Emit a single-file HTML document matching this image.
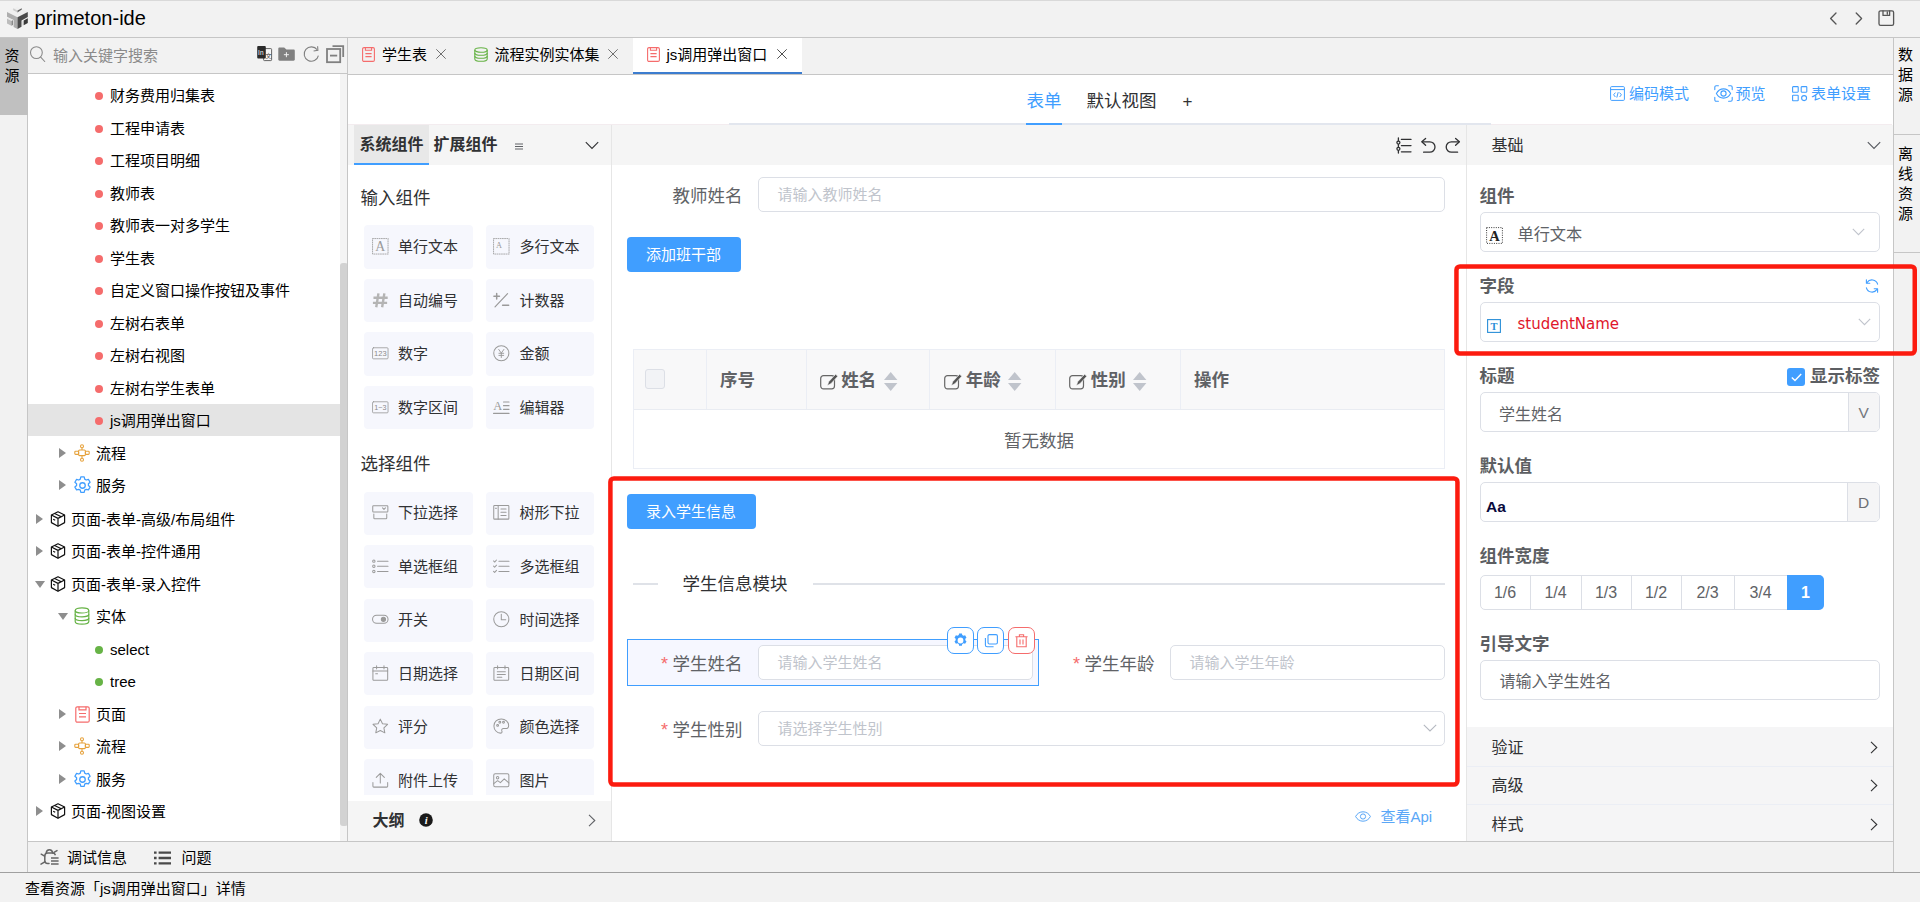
<!DOCTYPE html>
<html lang="zh-CN">
<head>
<meta charset="utf-8">
<title>primeton-ide</title>
<style>
*{box-sizing:border-box;margin:0;padding:0}
html,body{width:1920px;height:902px;overflow:hidden;background:#f2f2f2}
body{font-family:"Liberation Sans","Noto Sans CJK SC",sans-serif;font-size:15px;color:#000;position:relative}
.abs{position:absolute}
.t{position:absolute;white-space:nowrap;line-height:1}
svg{position:absolute;overflow:visible}
/* frame */
#titlebar{left:0;top:0;width:1920px;height:38px;background:#f2f2f2;border-top:1px solid #d9d9d9;border-bottom:1px solid #c6c6c6}
#leftstrip{left:0;top:38px;width:28px;height:835px;background:#f2f2f2;border-right:1px solid #c6c6c6}
#lefttab{left:0;top:38px;width:28px;height:77px;background:#c0c0c0}
#search{left:28px;top:38px;width:319px;height:36px;background:#f2f2f2;border-bottom:1px solid #c6c6c6}
#tree{left:28px;top:74px;width:319px;height:768px;background:#fff}
#treesb{left:340px;top:74px;width:7px;height:768px;background:#f4f4f4}
#treethumb{left:339.500px;top:263px;width:8px;height:563px;background:#d2d2d2;border-radius:3px}
#vdiv{left:347px;top:38px;width:1px;height:804px;background:#c6c6c6}
#tabbar{left:348px;top:38px;width:1545px;height:37px;background:#f2f2f2;border-bottom:1px solid #c6c6c6}
#main{left:348px;top:75px;width:1545px;height:767px;background:#fff}
#rightstrip{left:1893px;top:38px;width:27px;height:835px;background:#f2f2f2;border-left:1px solid #c6c6c6}
#bottombar{left:28px;top:841px;width:1865px;height:32px;background:#f2f2f2;border-top:1px solid #c6c6c6}
#statusbar{left:0;top:872px;width:1920px;height:30px;background:#f2f2f2;border-top:1px solid #a0a0a0}
/* tree */
.row{position:absolute;left:28px;width:312px;height:32.5px}
.row.sel{background:#e4e4e4}
.dot{position:absolute;width:8px;height:8px;border-radius:50%;background:#f56c6c}
.dot.g{background:#67b346}
.tt{position:absolute;white-space:nowrap;font-size:15px;line-height:20px;color:#000}
.arr{position:absolute;width:0;height:0;border-style:solid}
.arr.r{border-width:5px 0 5px 7px;border-color:transparent transparent transparent #8e8e8e}
.arr.d{border-width:7px 5px 0 5px;border-color:#8e8e8e transparent transparent transparent}
.th{top:367.500px;font-size:17.500px;line-height:24px;font-weight:bold;color:#606266}
svg.ed{top:371.500px;width:19px;height:18px}
svg.ct{top:371.500px;width:14px;height:19px}
.pl{font-size:17.500px;line-height:24px;font-weight:bold;color:#5c5e62}
.inp{border:1px solid #dcdfe6;border-radius:5px;background:#fff}
.bg{top:581.500px;font-size:16px;line-height:22px;color:#606266;text-align:center}
</style>
</head>
<body>
<!-- FRAME -->
<div class="abs" id="titlebar"></div>
<div class="abs" id="leftstrip"></div>
<div class="abs" id="lefttab"></div>
<div class="abs" id="search"></div>
<div class="abs" id="tree"></div>
<div class="abs" id="treesb"></div>
<div class="abs" id="treethumb"></div>
<div class="abs" id="vdiv"></div>
<div class="abs" id="tabbar"></div>
<div class="abs" id="main"></div>
<div class="abs" id="rightstrip"></div>
<div class="abs" id="bottombar"></div>
<div class="abs" id="statusbar"></div>

<!-- TITLE -->
<!--TITLE-START-->
<!-- logo -->
<svg style="left:6px;top:6px" width="23" height="24" viewBox="0 0 23 24">
<polygon points="1,6 11.5,0.8 21.8,6 11.5,11.2" fill="#efefef"/>
<polygon points="7.2,2.3 11.5,4.5 11.5,6.5 7.2,4.3" fill="#cdcdcd"/>
<polygon points="11.5,4.5 15.8,2.2 15.8,3.500 11.5,6.5" fill="#636363"/>
<polygon points="1,6 11.5,11.2 11.5,22.9 7.600,20.900 7.600,14 1,10.800" fill="#adadad"/>
<polygon points="21.800,6 11.500,11.200 11.500,22.900 15.500,20.700 15.500,14.400 21.800,11" fill="#4b4b4b"/>
<polygon points="1,12.600 5.400,14.800 5.400,19.700 1,17.500" fill="#bcbcbc"/>
<polygon points="5.400,14.800 7,14.100 7,19 5.400,19.700" fill="#8a8a8a"/>
<polygon points="1,12.600 2.600,11.900 7,14.100 5.400,14.800" fill="#e6e6e6"/>
<polygon points="16,15.400 17.700,14.400 17.700,19.100 16,20" fill="#dedede"/>
<polygon points="17.700,14.400 21.800,12.200 21.800,17 17.700,19.200" fill="#383838"/>
</svg>
<div class="t" style="left:34.5px;top:6px;font-size:20px;line-height:24px;color:#000;letter-spacing:0.02px">primeton-ide</div>
<!-- title right icons -->
<svg style="left:1828px;top:10px" width="70" height="18" viewBox="0 0 70 18" fill="none" stroke="#555" stroke-width="1.3" stroke-linecap="round" stroke-linejoin="round">
<path d="M8 3L2.6 8.5 8 14"/><path d="M28.2 3l5.4 5.5-5.4 5.5"/>
<rect x="51" y="0.8" width="14.6" height="14.6" rx="1.6"/><path d="M55 0.8v4.6h6.6V0.8M59.3 2v2"/>
</svg>
<!-- left tab -->
<div class="t" style="left:4.5px;top:46px;font-size:15px;line-height:20px;width:16px;white-space:normal;color:#000">资源</div>
<!-- search -->
<svg style="left:29px;top:45px" width="17" height="18" viewBox="0 0 17 18" fill="none" stroke="#8a8a8a" stroke-width="1.1" stroke-linecap="round"><circle cx="7.4" cy="7.6" r="5.9"/><path d="M11.7 12.1l4 4.4"/></svg>
<div class="t" style="left:53px;top:46px;font-size:15px;line-height:20px;color:#8a8a8a">输入关键字搜索</div>
<!-- search right icons -->
<svg style="left:256px;top:44px" width="90" height="22" viewBox="0 0 90 22">
<rect x="7.6" y="4.6" width="8" height="12" rx="0.8" fill="#f7f7f7" stroke="#555" stroke-width="0.9"/>
<rect x="1.2" y="2" width="8.6" height="12.6" rx="1" fill="#2b2b2b"/>
<text x="2.1" y="10.6" font-family="Liberation Sans,sans-serif" font-size="6.5" fill="#fff">In</text>
<text x="9.6" y="14.2" font-family="Liberation Sans,Noto Sans CJK SC,sans-serif" font-size="6" fill="#333">文</text>
<path d="M22.3 4.6c0-.7.5-1.2 1.2-1.2h4.7l2.2 2.1h7.2c.7 0 1.2.5 1.2 1.2v8.9c0 .7-.5 1.2-1.2 1.2H23.5c-.7 0-1.2-.5-1.2-1.2z" fill="#808080"/>
<path d="M30.4 8.2v5M27.9 10.7h5" stroke="#f2f2f2" stroke-width="1"/>
<g transform="translate(0,1.600)"><path d="M61.2 4.2A7.2 7.2 0 1 0 62.4 10" fill="none" stroke="#808080" stroke-width="1.100"/>
<path d="M57.6 5.4l4.3-.6-.3-4.2" fill="none" stroke="#808080" stroke-width="1.100"/></g>
<path d="M76.5 2.2h10.7v10.7" fill="none" stroke="#808080" stroke-width="1.8"/>
<rect x="71" y="5" width="13.2" height="13.2" fill="none" stroke="#808080" stroke-width="1.8"/>
<path d="M74 11.6h7.2" stroke="#808080" stroke-width="1.8"/>
</svg>
<!--TITLE-END-->

<!-- TREE -->
<!--TREE-START-->
<div class="dot" style="left:94.5px;top:91.5px"></div>
<div class="tt" style="left:110px;top:86px">财务费用归集表</div>
<div class="dot" style="left:94.5px;top:124.5px"></div>
<div class="tt" style="left:110px;top:119px">工程申请表</div>
<div class="dot" style="left:94.5px;top:156.5px"></div>
<div class="tt" style="left:110px;top:151px">工程项目明细</div>
<div class="dot" style="left:94.5px;top:189.5px"></div>
<div class="tt" style="left:110px;top:184px">教师表</div>
<div class="dot" style="left:94.5px;top:221.5px"></div>
<div class="tt" style="left:110px;top:216px">教师表一对多学生</div>
<div class="dot" style="left:94.5px;top:254.5px"></div>
<div class="tt" style="left:110px;top:249px">学生表</div>
<div class="dot" style="left:94.5px;top:286.5px"></div>
<div class="tt" style="left:110px;top:281px">自定义窗口操作按钮及事件</div>
<div class="dot" style="left:94.5px;top:319.5px"></div>
<div class="tt" style="left:110px;top:314px">左树右表单</div>
<div class="dot" style="left:94.5px;top:351.5px"></div>
<div class="tt" style="left:110px;top:346px">左树右视图</div>
<div class="dot" style="left:94.5px;top:384.5px"></div>
<div class="tt" style="left:110px;top:379px">左树右学生表单</div>
<div class="row sel" style="top:403.75px"></div>
<div class="dot" style="left:94.5px;top:416.5px"></div>
<div class="tt" style="left:110px;top:411px">js调用弹出窗口</div>
<div class="arr r" style="left:59px;top:447.5px"></div>
<svg style="left:74.3px;top:444.0px" width="16" height="18" viewBox="0 0 16 18" fill="none" stroke="#e6a23c" stroke-width="1.1"><circle cx="8" cy="2.2" r="1.5"/><circle cx="8" cy="15.8" r="1.5"/><rect x="4.6" y="6" width="6.8" height="5.6" rx="1"/><rect x="0.8" y="7.2" width="3.8" height="3.2" rx="0.8"/><rect x="11.4" y="7.2" width="3.8" height="3.2" rx="0.8"/><path d="M8 3.7V6M8 11.6V14.3"/></svg>
<div class="tt" style="left:96px;top:444px">流程</div>
<div class="arr r" style="left:59px;top:479.5px"></div>
<svg style="left:72.8px;top:475.5px" width="19" height="19" viewBox="0 0 18 18" fill="none" stroke="#409eff" stroke-width="1.2" stroke-linejoin="round"><circle cx="9" cy="9" r="2.6"/><path d="M7.4 0.9h3.2l0.5 2.1 1.4 0.8 2.1-0.6 1.6 2.7-1.6 1.5v1.6l1.6 1.5-1.6 2.7-2.1-0.6-1.4 0.8-0.5 2.1H7.4l-0.5-2.1-1.4-0.8-2.1 0.6-1.6-2.7 1.6-1.5V7.4L1.8 5.9l1.6-2.7 2.1 0.6 1.4-0.8z"/></svg>
<div class="tt" style="left:96px;top:476px">服务</div>
<div class="arr r" style="left:36px;top:513.5px"></div>
<svg style="left:50.4px;top:511.0px" width="16" height="16" viewBox="0 0 16 16" fill="none" stroke="#111" stroke-width="1.2" stroke-linejoin="round"><path d="M8 0.8l6.6 3.2v7.6L8 15.2 1.4 11.6V4z"/><path d="M1.4 4L8 7.4 14.6 4M8 7.4v7.8M4.6 2.5l6.7 3.3M3.2 8.2l2 1"/></svg>
<div class="tt" style="left:71px;top:510px">页面-表单-高级/布局组件</div>
<div class="arr r" style="left:36px;top:545.5px"></div>
<svg style="left:50.4px;top:543.0px" width="16" height="16" viewBox="0 0 16 16" fill="none" stroke="#111" stroke-width="1.2" stroke-linejoin="round"><path d="M8 0.8l6.6 3.2v7.6L8 15.2 1.4 11.6V4z"/><path d="M1.4 4L8 7.4 14.6 4M8 7.4v7.8M4.6 2.5l6.7 3.3M3.2 8.2l2 1"/></svg>
<div class="tt" style="left:71px;top:542px">页面-表单-控件通用</div>
<div class="arr d" style="left:34.5px;top:581px"></div>
<svg style="left:50.4px;top:576.0px" width="16" height="16" viewBox="0 0 16 16" fill="none" stroke="#111" stroke-width="1.2" stroke-linejoin="round"><path d="M8 0.8l6.6 3.2v7.6L8 15.2 1.4 11.6V4z"/><path d="M1.4 4L8 7.4 14.6 4M8 7.4v7.8M4.6 2.5l6.7 3.3M3.2 8.2l2 1"/></svg>
<div class="tt" style="left:71px;top:575px">页面-表单-录入控件</div>
<div class="arr d" style="left:57.5px;top:613px"></div>
<svg style="left:74.3px;top:607.0px" width="16" height="18" viewBox="0 0 16 18" fill="none" stroke="#67b346" stroke-width="1.2"><ellipse cx="8" cy="3.4" rx="6.8" ry="2.6"/><path d="M1.2 3.4v11.2c0 1.5 3 2.6 6.8 2.6s6.8-1.1 6.8-2.6V3.4"/><path d="M1.2 7.2c0 1.5 3 2.6 6.8 2.6s6.8-1.1 6.8-2.6M1.2 11c0 1.5 3 2.6 6.8 2.6s6.8-1.1 6.8-2.6"/></svg>
<div class="tt" style="left:96px;top:607px">实体</div>
<div class="dot g" style="left:94.5px;top:645.5px"></div>
<div class="tt" style="left:110px;top:640px">select</div>
<div class="dot g" style="left:94.5px;top:677.5px"></div>
<div class="tt" style="left:110px;top:672px">tree</div>
<div class="arr r" style="left:59px;top:708.5px"></div>
<svg style="left:74.8px;top:705.5px" width="15" height="17" viewBox="0 0 15 17" fill="none" stroke="#f56c6c" stroke-width="1.2"><rect x="0.8" y="0.8" width="13.4" height="15.4" rx="1.5"/><path d="M4 0.8v3h7v-3M4 7.5h7M4 10.8h7"/></svg>
<div class="tt" style="left:96px;top:705px">页面</div>
<div class="arr r" style="left:59px;top:740.5px"></div>
<svg style="left:74.3px;top:737.0px" width="16" height="18" viewBox="0 0 16 18" fill="none" stroke="#e6a23c" stroke-width="1.1"><circle cx="8" cy="2.2" r="1.5"/><circle cx="8" cy="15.8" r="1.5"/><rect x="4.6" y="6" width="6.8" height="5.6" rx="1"/><rect x="0.8" y="7.2" width="3.8" height="3.2" rx="0.8"/><rect x="11.4" y="7.2" width="3.8" height="3.2" rx="0.8"/><path d="M8 3.7V6M8 11.6V14.3"/></svg>
<div class="tt" style="left:96px;top:737px">流程</div>
<div class="arr r" style="left:59px;top:773.5px"></div>
<svg style="left:72.8px;top:769.5px" width="19" height="19" viewBox="0 0 18 18" fill="none" stroke="#409eff" stroke-width="1.2" stroke-linejoin="round"><circle cx="9" cy="9" r="2.6"/><path d="M7.4 0.9h3.2l0.5 2.1 1.4 0.8 2.1-0.6 1.6 2.7-1.6 1.5v1.6l1.6 1.5-1.6 2.7-2.1-0.6-1.4 0.8-0.5 2.1H7.4l-0.5-2.1-1.4-0.8-2.1 0.6-1.6-2.7 1.6-1.5V7.4L1.8 5.9l1.6-2.7 2.1 0.6 1.4-0.8z"/></svg>
<div class="tt" style="left:96px;top:770px">服务</div>
<div class="arr r" style="left:36px;top:805.5px"></div>
<svg style="left:50.4px;top:803.0px" width="16" height="16" viewBox="0 0 16 16" fill="none" stroke="#111" stroke-width="1.2" stroke-linejoin="round"><path d="M8 0.8l6.6 3.2v7.6L8 15.2 1.4 11.6V4z"/><path d="M1.4 4L8 7.4 14.6 4M8 7.4v7.8M4.6 2.5l6.7 3.3M3.2 8.2l2 1"/></svg>
<div class="tt" style="left:71px;top:802px">页面-视图设置</div>
<!--TREE-END-->

<!-- TABS -->
<!--TABS-START-->
<div class="abs" style="left:633px;top:38px;width:169px;height:36px;background:#fff;border-bottom:2px solid #3c7dcf"></div>
<!-- tab1 -->
<svg style="left:362px;top:47px" width="13" height="15" viewBox="0 0 13 15" fill="none" stroke="#f56c6c" stroke-width="1.1"><rect x="0.6" y="0.6" width="11.8" height="13.8" rx="1.4"/><path d="M3.4 0.6v2.6h6.2V0.6M3.4 6.6h6.2M3.4 9.6h6.2"/></svg>
<div class="t" style="left:382px;top:45px;font-size:15px;line-height:20px">学生表</div>
<svg style="left:436px;top:49px" width="10" height="10" viewBox="0 0 10 10" stroke="#707070" stroke-width="1"><path d="M0.3 0.3l9.4 9.4M9.7 0.3L0.3 9.7"/></svg>
<!-- tab2 -->
<svg style="left:473.5px;top:47px" width="14" height="15" viewBox="0 0 14 15" fill="none" stroke="#67b346" stroke-width="1.1"><ellipse cx="7" cy="3" rx="6.2" ry="2.3"/><path d="M0.8 3v9c0 1.3 2.8 2.3 6.2 2.3s6.2-1 6.2-2.3V3"/><path d="M0.8 6c0 1.3 2.8 2.3 6.2 2.3s6.2-1 6.2-2.3M0.8 9c0 1.3 2.8 2.3 6.2 2.3s6.2-1 6.2-2.3"/></svg>
<div class="t" style="left:494.5px;top:45px;font-size:15px;line-height:20px">流程实例实体集</div>
<svg style="left:608px;top:49px" width="10" height="10" viewBox="0 0 10 10" stroke="#707070" stroke-width="1"><path d="M0.3 0.3l9.4 9.4M9.7 0.3L0.3 9.7"/></svg>
<!-- tab3 -->
<svg style="left:647px;top:47px" width="13" height="15" viewBox="0 0 13 15" fill="none" stroke="#f56c6c" stroke-width="1.1"><rect x="0.6" y="0.6" width="11.8" height="13.8" rx="1.4"/><path d="M3.4 0.6v2.6h6.2V0.6M3.4 6.6h6.2M3.4 9.6h6.2"/></svg>
<div class="t" style="left:666.5px;top:45px;font-size:15px;line-height:20px">js调用弹出窗口</div>
<svg style="left:777px;top:49px" width="10" height="10" viewBox="0 0 10 10" stroke="#505050" stroke-width="1"><path d="M0.3 0.3l9.4 9.4M9.7 0.3L0.3 9.7"/></svg>
<!--TABS-END-->

<!-- MAIN -->
<!--MAIN-START-->
<!-- sub header -->
<div class="abs" style="left:729px;top:123px;width:762px;height:2px;background:#e2e6ee"></div><div class="abs" style="left:1491px;top:124px;width:401px;height:1px;background:#f3ecef"></div>
<div class="abs" style="left:1026px;top:122.500px;width:36px;height:2.500px;background:#409eff"></div>
<div class="t" style="left:1026.5px;top:89px;font-size:17.5px;line-height:24px;color:#409eff">表单</div>
<div class="t" style="left:1086.5px;top:89px;font-size:17.5px;line-height:24px;color:#303133">默认视图</div>
<div class="t" style="left:1182.5px;top:90px;font-size:17px;line-height:24px;color:#303133">+</div>
<!-- right links -->
<svg style="left:1610px;top:86px" width="15" height="15" viewBox="0 0 15 15" fill="none" stroke="#409eff" stroke-width="1"><rect x="0.6" y="0.6" width="13.8" height="13.8" rx="1"/><path d="M0.6 3.6h13.8M5.4 6.6L3.6 8.8l1.8 2.2M9.6 6.6l1.8 2.2-1.8 2.2M8.2 6.2l-1.4 5.4"/></svg>
<div class="t" style="left:1629px;top:83.5px;font-size:15px;line-height:20px;color:#409eff">编码模式</div>
<svg style="left:1714px;top:85px" width="19" height="17" viewBox="0 0 19 17" fill="none" stroke="#409eff" stroke-width="1.1" stroke-linecap="round"><path d="M0.8 4.6V2.2c0-.8.6-1.4 1.4-1.4h2.2M14.6 0.8h2.2c.8 0 1.4.6 1.4 1.4v2.4M18.2 12.4v2.4c0 .8-.6 1.4-1.4 1.4h-2.2M4.4 16.2H2.2c-.8 0-1.4-.6-1.4-1.4v-2.4"/><path d="M2.4 8.5c1.6-3 4.2-4.6 7.1-4.6s5.5 1.600 7.100 4.600c-1.600 3-4.200 4.600-7.100 4.600S4 11.500 2.400 8.500z"/><circle cx="9.500" cy="8.500" r="2.600"/></svg>
<div class="t" style="left:1735.500px;top:83.500px;font-size:15px;line-height:20px;color:#409eff">预览</div>
<svg style="left:1791.500px;top:86px" width="16" height="16" viewBox="0 0 16 16" fill="none" stroke="#409eff" stroke-width="1.100"><rect x="0.600" y="0.600" width="5.600" height="5.600" rx="0.600"/><rect x="9.200" y="0.600" width="5.600" height="5.600" rx="0.600"/><rect x="0.600" y="9.200" width="5.600" height="5.600" rx="0.600"/><circle cx="12.100" cy="12.100" r="2.500"/></svg>
<div class="t" style="left:1811px;top:83.500px;font-size:15px;line-height:20px;color:#409eff">表单设置</div>
<!-- panel header band -->
<div class="abs" style="left:348px;top:124.500px;width:1545px;height:40px;background:#f5f5f5"></div><div class="abs" style="left:348px;top:124px;width:381px;height:1px;background:#f3ecef"></div>
<div class="abs" style="left:611px;top:125px;width:1px;height:716px;background:#e6e6e6"></div>
<div class="abs" style="left:1465.500px;top:125px;width:1px;height:716px;background:#e6e6e6"></div>
<!--MAIN-END-->

<!-- COMPONENT PANEL -->
<!--COMP-START-->
<div class="abs" style="left:354px;top:125px;width:75px;height:39.500px;background:#e8e8e8;border-bottom:2px solid #409eff"></div>
<div class="t" style="left:359.500px;top:134px;font-size:16px;line-height:22px;font-weight:bold;color:#303133">系统组件</div>
<div class="t" style="left:433.500px;top:134px;font-size:16px;line-height:22px;font-weight:bold;color:#303133">扩展组件</div>
<svg style="left:515px;top:142.500px" width="8" height="7" viewBox="0 0 8 7" stroke="#606266" stroke-width="1"><path d="M0 1h8M0 3.500h8M0 6h8"/></svg>
<svg style="left:585px;top:141px" width="14" height="9" viewBox="0 0 14 9" fill="none" stroke="#303133" stroke-width="1.100"><path d="M0.800 1.200L7 7.400l6.200-6.200"/></svg>
<div class="t" style="left:360.500px;top:186px;font-size:17.500px;line-height:24px;color:#303133">输入组件</div>
<div class="t" style="left:360.500px;top:451.500px;font-size:17.500px;line-height:24px;color:#303133">选择组件</div>
<div class="abs" style="left:364px;top:225.00px;width:108.7px;height:43.70px;background:#f6f7fd;border-radius:4px"></div>
<svg style="left:371.5px;top:238.45px" width="16.600" height="16.600" viewBox="0 0 18 18" fill="none" stroke="#9a9a9a" stroke-width="1.1" stroke-linecap="round" stroke-linejoin="round"><rect x="0.6" y="0.6" width="16.8" height="16.8" stroke-dasharray="1 1.4" stroke-width="0.9"/><text x="9" y="14.6" text-anchor="middle" font-family="Liberation Serif,serif" font-size="15" fill="#9a9a9a" stroke="none">A</text></svg>
<div class="tt" style="left:398px;top:237.45px;color:#303133">单行文本</div>
<div class="abs" style="left:486px;top:225.00px;width:108px;height:43.70px;background:#f6f7fd;border-radius:4px"></div>
<svg style="left:492.5px;top:238.45px" width="16.600" height="16.600" viewBox="0 0 18 18" fill="none" stroke="#9a9a9a" stroke-width="1.1" stroke-linecap="round" stroke-linejoin="round"><rect x="0.6" y="0.6" width="16.8" height="16.8" stroke-dasharray="1 1.4" stroke-width="0.9"/><text x="6.5" y="10.4" text-anchor="middle" font-family="Liberation Serif,serif" font-size="9" fill="#9a9a9a" stroke="none">A</text></svg>
<div class="tt" style="left:519.5px;top:237.45px;color:#303133">多行文本</div>
<div class="abs" style="left:364px;top:278.50px;width:108.7px;height:43.70px;background:#f6f7fd;border-radius:4px"></div>
<svg style="left:371.5px;top:291.95px" width="16.600" height="16.600" viewBox="0 0 18 18" fill="none" stroke="#b4b4b4" stroke-width="2.6"><path d="M7 1.500L4.600 16.500M13.400 1.500L11 16.500M1.600 6.200h15.400M1 11.800h15.400"/></svg>
<div class="tt" style="left:398px;top:290.95px;color:#303133">自动编号</div>
<div class="abs" style="left:486px;top:278.50px;width:108px;height:43.70px;background:#f6f7fd;border-radius:4px"></div>
<svg style="left:492.5px;top:291.95px" width="16.600" height="16.600" viewBox="0 0 18 18" fill="none" stroke="#9a9a9a" stroke-width="1.1" stroke-linecap="round" stroke-linejoin="round"><path d="M1 4.600h6M4 1.600v6M10.400 14.400h6.600" stroke-width="1.600"/><path d="M15.800 1.800L2.200 16.200" stroke-width="1.300"/></svg>
<div class="tt" style="left:519.5px;top:290.95px;color:#303133">计数器</div>
<div class="abs" style="left:364px;top:332.00px;width:108.7px;height:43.70px;background:#f6f7fd;border-radius:4px"></div>
<svg style="left:371.5px;top:345.45px" width="16.600" height="16.600" viewBox="0 0 18 18" fill="none" stroke="#9a9a9a" stroke-width="0.9" stroke-linecap="round" stroke-linejoin="round"><rect x="0.600" y="3" width="16.800" height="12" rx="1"/><text x="9" y="11.700" text-anchor="middle" font-family="Liberation Sans,sans-serif" font-size="8.200" fill="#8a8a8a" stroke="none">123</text></svg>
<div class="tt" style="left:398px;top:344.45px;color:#303133">数字</div>
<div class="abs" style="left:486px;top:332.00px;width:108px;height:43.70px;background:#f6f7fd;border-radius:4px"></div>
<svg style="left:492.5px;top:345.45px" width="16.600" height="16.600" viewBox="0 0 18 18" fill="none" stroke="#9a9a9a" stroke-width="1.1" stroke-linecap="round" stroke-linejoin="round"><circle cx="9" cy="9" r="8.200"/><path d="M6.200 4.800L9 8.800l2.800-4M9 8.800v4.800M6.400 9h5.200M6.400 11.300h5.200" stroke-width="1"/></svg>
<div class="tt" style="left:519.5px;top:344.45px;color:#303133">金额</div>
<div class="abs" style="left:364px;top:385.50px;width:108.7px;height:43.70px;background:#f6f7fd;border-radius:4px"></div>
<svg style="left:371.5px;top:398.95px" width="16.600" height="16.600" viewBox="0 0 18 18" fill="none" stroke="#9a9a9a" stroke-width="0.9" stroke-linecap="round" stroke-linejoin="round"><rect x="0.600" y="3" width="16.800" height="12" rx="1"/><text x="9" y="11.600" text-anchor="middle" font-family="Liberation Sans,sans-serif" font-size="7.800" fill="#8a8a8a" stroke="none">1~3</text></svg>
<div class="tt" style="left:398px;top:397.95px;color:#303133">数字区间</div>
<div class="abs" style="left:486px;top:385.50px;width:108px;height:43.70px;background:#f6f7fd;border-radius:4px"></div>
<svg style="left:492.5px;top:398.95px" width="16.600" height="16.600" viewBox="0 0 18 18" fill="none" stroke="#9a9a9a" stroke-width="1.1" stroke-linecap="round" stroke-linejoin="round"><text x="5.200" y="12" text-anchor="middle" font-family="Liberation Serif,serif" font-size="13.500" fill="#9a9a9a" stroke="none">A</text><path d="M11.400 3.200h6M11.400 7.200h6M11.400 11.200h6M0.600 15.600h16.800" stroke-width="1.200"/></svg>
<div class="tt" style="left:519.5px;top:397.95px;color:#303133">编辑器</div>
<div class="abs" style="left:364px;top:491.80px;width:108.7px;height:43.20px;background:#f6f7fd;border-radius:4px"></div>
<svg style="left:371.5px;top:504.40px" width="16.600" height="16.600" viewBox="0 0 18 18" fill="none" stroke="#9a9a9a" stroke-width="1.1" stroke-linecap="round" stroke-linejoin="round"><rect x="0.800" y="2" width="16.400" height="6.600" rx="0.800"/><path d="M11.400 4.200l1.600 1.700 1.600-1.700"/><path d="M2 10.800v4.400c0 .5.300.8.800.8h12.400c.5 0 .8-.3.800-.8v-4.400"/></svg>
<div class="tt" style="left:398px;top:503.40px;color:#303133">下拉选择</div>
<div class="abs" style="left:486px;top:491.80px;width:108px;height:43.20px;background:#f6f7fd;border-radius:4px"></div>
<svg style="left:492.5px;top:504.40px" width="16.600" height="16.600" viewBox="0 0 18 18" fill="none" stroke="#9a9a9a" stroke-width="1.1" stroke-linecap="round" stroke-linejoin="round"><rect x="0.800" y="1.600" width="16.400" height="14.800" rx="0.800"/><path d="M5.600 1.600v14.800M8.600 5.400h5.600M8.600 9h5.600M8.600 12.600h5.600M2.600 4.600h1.200"/></svg>
<div class="tt" style="left:519.5px;top:503.40px;color:#303133">树形下拉</div>
<div class="abs" style="left:364px;top:545.30px;width:108.7px;height:43.20px;background:#f6f7fd;border-radius:4px"></div>
<svg style="left:371.5px;top:557.90px" width="16.600" height="16.600" viewBox="0 0 18 18" fill="none" stroke="#9a9a9a" stroke-width="1.1" stroke-linecap="round" stroke-linejoin="round"><circle cx="2" cy="3.400" r="1.300"/><circle cx="2" cy="9" r="1.300"/><circle cx="2" cy="14.600" r="1.300"/><path d="M6 3.400h11.400M6 9h11.400M6 14.600h11.400"/></svg>
<div class="tt" style="left:398px;top:556.90px;color:#303133">单选框组</div>
<div class="abs" style="left:486px;top:545.30px;width:108px;height:43.20px;background:#f6f7fd;border-radius:4px"></div>
<svg style="left:492.5px;top:557.90px" width="16.600" height="16.600" viewBox="0 0 18 18" fill="none" stroke="#9a9a9a" stroke-width="1.1" stroke-linecap="round" stroke-linejoin="round"><path d="M0.600 3.200l1.200 1.200 2-2.200M0.600 8.800l1.200 1.200 2-2.200M0.600 14.400l1.200 1.200 2-2.200M6.400 3.400h11M6.400 9h11M6.400 14.600h11"/></svg>
<div class="tt" style="left:519.5px;top:556.90px;color:#303133">多选框组</div>
<div class="abs" style="left:364px;top:598.80px;width:108.7px;height:43.20px;background:#f6f7fd;border-radius:4px"></div>
<svg style="left:371.5px;top:611.40px" width="16.600" height="16.600" viewBox="0 0 18 18" fill="none" stroke="#9a9a9a" stroke-width="1.1" stroke-linecap="round" stroke-linejoin="round"><rect x="0.600" y="4.600" width="16.800" height="8.800" rx="4.400"/><circle cx="12.400" cy="9" r="2.300" fill="#9a9a9a"/></svg>
<div class="tt" style="left:398px;top:610.40px;color:#303133">开关</div>
<div class="abs" style="left:486px;top:598.80px;width:108px;height:43.20px;background:#f6f7fd;border-radius:4px"></div>
<svg style="left:492.5px;top:611.40px" width="16.600" height="16.600" viewBox="0 0 18 18" fill="none" stroke="#9a9a9a" stroke-width="1.1" stroke-linecap="round" stroke-linejoin="round"><circle cx="9" cy="9" r="8.200"/><path d="M9 3.600V9.400h4.800"/></svg>
<div class="tt" style="left:519.5px;top:610.40px;color:#303133">时间选择</div>
<div class="abs" style="left:364px;top:652.30px;width:108.7px;height:43.20px;background:#f6f7fd;border-radius:4px"></div>
<svg style="left:371.5px;top:664.90px" width="16.600" height="16.600" viewBox="0 0 18 18" fill="none" stroke="#9a9a9a" stroke-width="1.1" stroke-linecap="round" stroke-linejoin="round"><rect x="1" y="2.600" width="16" height="14" rx="1"/><path d="M5 0.800v3.400M13 0.800v3.400M1 6.600h16M4 9.600h2"/></svg>
<div class="tt" style="left:398px;top:663.90px;color:#303133">日期选择</div>
<div class="abs" style="left:486px;top:652.30px;width:108px;height:43.20px;background:#f6f7fd;border-radius:4px"></div>
<svg style="left:492.5px;top:664.90px" width="16.600" height="16.600" viewBox="0 0 18 18" fill="none" stroke="#9a9a9a" stroke-width="1.1" stroke-linecap="round" stroke-linejoin="round"><rect x="1" y="2.600" width="16" height="14" rx="1"/><path d="M5 0.800v3.400M13 0.800v3.400M4.600 7.200h8.800M4.600 10.200h8.800M4.600 13.200h5"/></svg>
<div class="tt" style="left:519.5px;top:663.90px;color:#303133">日期区间</div>
<div class="abs" style="left:364px;top:705.80px;width:108.7px;height:43.20px;background:#f6f7fd;border-radius:4px"></div>
<svg style="left:371.5px;top:718.40px" width="16.600" height="16.600" viewBox="0 0 18 18" fill="none" stroke="#9a9a9a" stroke-width="1.1" stroke-linecap="round" stroke-linejoin="round"><path d="M9 1.200l2.400 5 5.500.7-4 3.800 1 5.400L9 13.500l-4.900 2.600 1-5.400-4-3.800 5.500-.7z"/></svg>
<div class="tt" style="left:398px;top:717.40px;color:#303133">评分</div>
<div class="abs" style="left:486px;top:705.80px;width:108px;height:43.20px;background:#f6f7fd;border-radius:4px"></div>
<svg style="left:492.5px;top:718.40px" width="16.600" height="16.600" viewBox="0 0 18 18" fill="none" stroke="#9a9a9a" stroke-width="1.1" stroke-linecap="round" stroke-linejoin="round"><path d="M9 1C4.600 1 1 4.400 1 8.600c0 4.200 3.400 7.800 7 7.800 1.600 0 2.200-1.200 1.600-2.400-.6-1.300.2-2.600 1.800-2.600h2.200c2 0 3.400-1.400 3.400-3.400C17 4.200 13.400 1 9 1z"/><circle cx="5" cy="8" r="1"/><circle cx="7.400" cy="4.600" r="1"/><circle cx="11.400" cy="4.600" r="1"/></svg>
<div class="tt" style="left:519.5px;top:717.40px;color:#303133">颜色选择</div>
<div class="abs" style="left:364px;top:759.30px;width:108.7px;height:35.70px;background:#f6f7fd;border-radius:4px 4px 0 0"></div>
<svg style="left:371.5px;top:771.90px" width="16.600" height="16.600" viewBox="0 0 18 18" fill="none" stroke="#9a9a9a" stroke-width="1.1" stroke-linecap="round" stroke-linejoin="round"><path d="M9 12V1.600M4.600 5.800L9 1.400l4.400 4.400M1 11.400v4c0 .6.400 1 1 1h14c.6 0 1-.4 1-1v-4"/></svg>
<div class="tt" style="left:398px;top:770.90px;color:#303133">附件上传</div>
<div class="abs" style="left:486px;top:759.30px;width:108px;height:35.70px;background:#f6f7fd;border-radius:4px 4px 0 0"></div>
<svg style="left:492.5px;top:771.90px" width="16.600" height="16.600" viewBox="0 0 18 18" fill="none" stroke="#9a9a9a" stroke-width="1.1" stroke-linecap="round" stroke-linejoin="round"><rect x="0.800" y="2" width="16.400" height="14" rx="1.600"/><circle cx="5" cy="6.200" r="1.300"/><path d="M0.800 12.600l4.200-3.200 3 2.200 4.200-4.200 5 4.400"/></svg>
<div class="tt" style="left:519.5px;top:770.90px;color:#303133">图片</div>
<div class="abs" style="left:348px;top:801px;width:263px;height:40px;background:#f5f5f5"></div>
<div class="t" style="left:372.500px;top:810px;font-size:16px;line-height:22px;font-weight:bold;color:#303133">大纲</div>
<svg style="left:419px;top:813px" width="14" height="14" viewBox="0 0 14 14"><circle cx="7" cy="7" r="6.800" fill="#1a1a1a"/><text x="7.200" y="10.800" text-anchor="middle" font-family="Liberation Serif,serif" font-style="italic" font-weight="bold" font-size="10.500" fill="#fff">i</text></svg>
<svg style="left:588px;top:814px" width="8" height="13" viewBox="0 0 8 13" fill="none" stroke="#606266" stroke-width="1.100"><path d="M1 0.800l5.800 5.700L1 12.200"/></svg>
<!--COMP-END-->

<!-- CANVAS -->
<!--CANVAS-START-->
<!-- canvas header icons -->
<svg style="left:1395px;top:137px" width="68" height="17" viewBox="0 0 68 17" fill="none" stroke="#303133" stroke-width="1.300" stroke-linecap="round" stroke-linejoin="round">
<path d="M6.400 2.400h9.600M6.400 8.600h9.600M6.400 14.800h9.600M3.400 1v15"/><circle cx="3.400" cy="5.600" r="1.500" fill="#f5f5f5"/><circle cx="3.400" cy="11.800" r="1.500" fill="#f5f5f5"/>
<path d="M30.600 1.400l-3.800 3.400 3.800 3.400"/><path d="M27.400 4.800h7.400a5 5 0 0 1 0 10.400h-6.200"/>
<path d="M60.600 1.400l3.800 3.400-3.800 3.400"/><path d="M63.800 4.800h-7.400a5 5 0 0 0 0 10.400h6.200"/>
</svg>
<!-- teacher name -->
<div class="t" style="left:672.500px;top:183.500px;font-size:17.500px;line-height:24px;color:#606266">教师姓名</div>
<div class="abs" style="left:758px;top:177px;width:687px;height:35px;border:1px solid #dcdfe6;border-radius:5px;background:#fff"></div>
<div class="t" style="left:777.500px;top:184.500px;font-size:15px;line-height:20px;color:#c0c4cc">请输入教师姓名</div>
<!-- button 1 -->
<div class="abs" style="left:627px;top:237px;width:114px;height:35px;background:#409eff;border-radius:4px"></div>
<div class="t" style="left:646px;top:244.500px;font-size:15px;line-height:20px;color:#fff">添加班干部</div>
<!-- table -->
<div class="abs" style="left:633px;top:349px;width:812px;height:120px;border:1px solid #ebeef5;background:#fff"></div>
<div class="abs" style="left:634px;top:350px;width:810px;height:60px;background:#f8f8f9;border-bottom:1px solid #e9ecf2"></div>
<div class="abs" style="left:706px;top:350px;width:1px;height:59px;background:#ebeef5"></div>
<div class="abs" style="left:806px;top:350px;width:1px;height:59px;background:#ebeef5"></div>
<div class="abs" style="left:928.700px;top:350px;width:1px;height:59px;background:#ebeef5"></div>
<div class="abs" style="left:1054.700px;top:350px;width:1px;height:59px;background:#ebeef5"></div>
<div class="abs" style="left:1179.700px;top:350px;width:1px;height:59px;background:#ebeef5"></div>
<div class="abs" style="left:645px;top:369px;width:20px;height:20px;border:1px solid #dcdfe6;border-radius:3px;background:#f2f3f6"></div>
<div class="t th" style="left:720px">序号</div>
<svg class="ed" style="left:820px"><use href="#edit"/></svg>
<div class="t th" style="left:841.200px">姓名</div>
<svg class="ct" style="left:884px"><use href="#carets"/></svg>
<svg class="ed" style="left:944px"><use href="#edit"/></svg>
<div class="t th" style="left:965.700px">年龄</div>
<svg class="ct" style="left:1008px"><use href="#carets"/></svg>
<svg class="ed" style="left:1069px"><use href="#edit"/></svg>
<div class="t th" style="left:1090.700px">性别</div>
<svg class="ct" style="left:1133px"><use href="#carets"/></svg>
<div class="t th" style="left:1194px">操作</div>
<div class="t" style="left:1004px;top:429px;font-size:17.500px;line-height:24px;color:#606266">暂无数据</div>
<svg width="0" height="0" style="left:0;top:0"><defs>
<g id="edit"><rect x="0.700" y="3.700" width="13.800" height="13.200" rx="2.800" fill="none" stroke="#666" stroke-width="1.200"/><path d="M7.400 13.600l1.300-3.900 6.900-7.400 2.200 2-6.900 7.400z" fill="#555" stroke="#f8f8f9" stroke-width="0.600"/></g>
<g id="carets" fill="#c0c4cc"><path d="M6.700 0l6.700 8H0z"/><path d="M0 11h13.400l-6.700 8z"/></g>
</defs></svg>
<!-- student button -->
<div class="abs" style="left:627px;top:494px;width:129px;height:35px;background:#409eff;border-radius:4px"></div>
<div class="t" style="left:646px;top:501.500px;font-size:15px;line-height:20px;color:#fff">录入学生信息</div>
<!-- divider -->
<div class="abs" style="left:633px;top:583px;width:25px;height:2px;background:#dfe2e8"></div>
<div class="abs" style="left:813px;top:583px;width:632px;height:2px;background:#dfe2e8"></div>
<div class="t" style="left:682.500px;top:571.500px;font-size:17.500px;line-height:24px;color:#303133">学生信息模块</div>
<!-- selected field -->
<div class="abs" style="left:627px;top:639px;width:412px;height:47px;border:1px solid #409eff;background:#f6f7ff"></div>
<div class="t" style="left:661px;top:651.500px;font-size:18px;line-height:24px;color:#f56c6c">*</div>
<div class="t" style="left:672.500px;top:651.500px;font-size:17.500px;line-height:24px;color:#606266">学生姓名</div>
<div class="abs" style="left:758px;top:645px;width:275px;height:35px;border:1px solid #dcdfe6;border-radius:5px;background:#fff"></div>
<div class="t" style="left:777.500px;top:652.500px;font-size:15px;line-height:20px;color:#c0c4cc">请输入学生姓名</div>
<!-- action buttons -->
<div class="abs" style="left:947px;top:627px;width:27px;height:27px;border:1px solid #409eff;border-radius:7px;background:#fff"></div>
<div class="abs" style="left:977px;top:627px;width:27px;height:27px;border:1px solid #409eff;border-radius:7px;background:#fff"></div>
<div class="abs" style="left:1008px;top:627px;width:27px;height:27px;border:1px solid #f56c6c;border-radius:7px;background:#fff"></div>
<svg style="left:953px;top:633px" width="15" height="15" viewBox="0 0 15 15"><path fill="#409eff" fill-rule="evenodd" d="M6.100 0.500h2.800l.35 1.600 1.300.75 1.550-.5 1.400 2.400-1.200 1.100v1.500l1.200 1.100-1.400 2.400-1.550-.5-1.300.75-.35 1.600H6.100l-.35-1.600-1.300-.75-1.550.5-1.400-2.400 1.200-1.100V5.850l-1.200-1.100 1.400-2.400 1.550.5 1.300-.75zM7.500 4.600a2.900 2.900 0 1 0 0 5.800 2.900 2.900 0 0 0 0-5.800z"/></svg>
<svg style="left:983.500px;top:633.500px" width="15" height="14" viewBox="0 0 15 14" fill="none" stroke="#409eff" stroke-width="1.100"><rect x="4" y="0.600" width="9.400" height="9.400" rx="1.400"/><path d="M1.400 4v7c0 1 .8 1.800 1.800 1.800h6.400"/></svg>
<svg style="left:1015px;top:633.500px" width="13" height="14" viewBox="0 0 13 14" fill="none" stroke="#f56c6c" stroke-width="1.100"><path d="M0.400 2.800h12.200M4.400 2.600V0.800h4.200v1.800M1.800 2.800v10h9.400v-10M5 5.600v4.800M8 5.600v4.800"/></svg>
<!-- age -->
<div class="t" style="left:1073px;top:651.500px;font-size:18px;line-height:24px;color:#f56c6c">*</div>
<div class="t" style="left:1084.500px;top:651.500px;font-size:17.500px;line-height:24px;color:#606266">学生年龄</div>
<div class="abs" style="left:1170px;top:645px;width:275px;height:35px;border:1px solid #dcdfe6;border-radius:5px;background:#fff"></div>
<div class="t" style="left:1189.500px;top:652.500px;font-size:15px;line-height:20px;color:#c0c4cc">请输入学生年龄</div>
<!-- gender -->
<div class="t" style="left:661px;top:717.500px;font-size:18px;line-height:24px;color:#f56c6c">*</div>
<div class="t" style="left:672.500px;top:717.500px;font-size:17.500px;line-height:24px;color:#606266">学生性别</div>
<div class="abs" style="left:758px;top:711px;width:687px;height:35px;border:1px solid #dcdfe6;border-radius:5px;background:#fff"></div>
<div class="t" style="left:777.500px;top:718.500px;font-size:15px;line-height:20px;color:#c0c4cc">请选择学生性别</div>
<svg style="left:1422.500px;top:724px" width="14" height="8" viewBox="0 0 14 8" fill="none" stroke="#b4b8c0" stroke-width="1.100"><path d="M0.800 0.800L7 7l6.200-6.200"/></svg>
<!-- view api -->
<svg style="left:1355px;top:811px" width="16" height="11" viewBox="0 0 16 11" fill="none" stroke="#5aa7f7" stroke-width="1"><path d="M0.600 5.500C2.200 2.400 4.900.800 8 .800s5.800 1.600 7.400 4.700c-1.600 3.100-4.300 4.700-7.400 4.700S2.200 8.600.600 5.500z"/><circle cx="8" cy="5.500" r="2.600"/></svg>
<div class="t" style="left:1380.500px;top:806.500px;font-size:15px;line-height:20px;color:#5aa7f7">查看Api</div>
<!--CANVAS-END-->

<!-- PROPS -->
<!--PROPS-START-->
<!-- header -->
<div class="t" style="left:1491.500px;top:135px;font-size:16px;line-height:22px;color:#303133">基础</div>
<svg style="left:1867px;top:141px" width="14" height="9" viewBox="0 0 14 9" fill="none" stroke="#55585e" stroke-width="1.100"><path d="M0.800 1.200L7 7.400l6.200-6.200"/></svg>
<!-- 组件 -->
<div class="t pl" style="left:1479.500px;top:184px">组件</div>
<div class="abs inp" style="left:1480px;top:212px;width:400px;height:40px"></div>
<svg style="left:1485.500px;top:226.500px" width="17" height="17" viewBox="0 0 17 17"><rect x="0.600" y="0.600" width="15.800" height="15.800" fill="none" stroke="#222" stroke-width="0.900" stroke-dasharray="1 1.300"/><text x="8.500" y="14" text-anchor="middle" font-family="Liberation Serif,serif" font-weight="bold" font-size="14.500" fill="#222">A</text></svg>
<div class="t" style="left:1517.500px;top:223px;font-size:16.200px;line-height:22px;color:#606266">单行文本</div>
<svg style="left:1851.500px;top:228px" width="13" height="8" viewBox="0 0 13 8" fill="none" stroke="#c0c4cc" stroke-width="1.100"><path d="M0.800 0.800l5.700 5.800 5.700-5.800"/></svg>
<!-- 字段 -->
<div class="t pl" style="left:1479.500px;top:274px">字段</div>
<svg style="left:1864.500px;top:278.500px" width="14" height="14" viewBox="0 0 14 14" fill="none" stroke="#409eff" stroke-width="1.100" stroke-linecap="round" stroke-linejoin="round"><path d="M12.600 5.200A5.900 5.900 0 0 0 2 3.600"/><path d="M1.400 0.800v3.400h3.400"/><path d="M1.400 8.800A5.900 5.900 0 0 0 12 10.400"/><path d="M12.600 13.200V9.800H9.200"/></svg>
<div class="abs inp" style="left:1480px;top:302px;width:400px;height:40px"></div>
<svg style="left:1487px;top:319px" width="14" height="14" viewBox="0 0 14 14"><rect x="0.600" y="0.600" width="12.800" height="12.800" fill="none" stroke="#2b8fd8" stroke-width="1.100"/><text x="7" y="11.300" text-anchor="middle" font-family="Liberation Serif,serif" font-weight="bold" font-size="10.500" fill="#2b8fd8">T</text></svg>
<div class="t" style="left:1517.500px;top:313px;font-size:15px;line-height:22px;color:#e0162b;font-family:'DejaVu Sans','Liberation Sans',sans-serif">studentName</div>
<svg style="left:1858px;top:318px" width="13" height="8" viewBox="0 0 13 8" fill="none" stroke="#c0c4cc" stroke-width="1.100"><path d="M0.800 0.800l5.700 5.800 5.700-5.800"/></svg>
<!-- 标题 -->
<div class="t pl" style="left:1479.500px;top:364px">标题</div>
<div class="abs" style="left:1787px;top:368px;width:18px;height:18px;background:#409eff;border-radius:3px"></div>
<svg style="left:1790.500px;top:372.500px" width="11" height="9" viewBox="0 0 11 9" fill="none" stroke="#fff" stroke-width="1.400"><path d="M0.800 4.400l3.200 3.200L10.200 1"/></svg>
<div class="t pl" style="left:1810px;top:364px">显示标签</div>
<div class="abs inp" style="left:1480px;top:392px;width:400px;height:40px"></div>
<div class="abs" style="left:1848px;top:393px;width:31px;height:38px;background:#f5f5f6;border-left:1px solid #dcdfe6;border-radius:0 4px 4px 0"></div>
<div class="t" style="left:1499px;top:403.500px;font-size:16px;line-height:22px;color:#606266">学生姓名</div>
<div class="t" style="left:1858.500px;top:402px;font-size:15.500px;line-height:22px;color:#73767c">V</div>
<!-- 默认值 -->
<div class="t pl" style="left:1479.500px;top:454px">默认值</div>
<div class="abs inp" style="left:1480px;top:482px;width:400px;height:40px"></div>
<div class="abs" style="left:1847px;top:483px;width:32px;height:38px;background:#f5f5f6;border-left:1px solid #dcdfe6;border-radius:0 4px 4px 0"></div>
<div class="t" style="left:1486px;top:496px;font-size:15.500px;line-height:22px;font-weight:bold;color:#0a0a3c">Aa</div>
<div class="t" style="left:1858px;top:491.500px;font-size:15.500px;line-height:22px;color:#6c6e72">D</div>
<!-- 组件宽度 -->
<div class="t pl" style="left:1479.500px;top:544px">组件宽度</div>
<div class="abs" style="left:1480px;top:575px;width:344px;height:35px;border:1px solid #dcdfe6;border-radius:5px;background:#fff"></div>
<div class="abs" style="left:1530px;top:575px;width:1px;height:35px;background:#dcdfe6"></div>
<div class="abs" style="left:1580.500px;top:575px;width:1px;height:35px;background:#dcdfe6"></div>
<div class="abs" style="left:1631px;top:575px;width:1px;height:35px;background:#dcdfe6"></div>
<div class="abs" style="left:1681px;top:575px;width:1px;height:35px;background:#dcdfe6"></div>
<div class="abs" style="left:1734px;top:575px;width:1px;height:35px;background:#dcdfe6"></div>
<div class="abs" style="left:1787px;top:575px;width:37px;height:35px;background:#409eff;border-radius:0 5px 5px 0"></div>
<div class="t bg" style="left:1480px;width:50px">1/6</div>
<div class="t bg" style="left:1530px;width:51px">1/4</div>
<div class="t bg" style="left:1581px;width:50px">1/3</div>
<div class="t bg" style="left:1631px;width:50px">1/2</div>
<div class="t bg" style="left:1681px;width:53px">2/3</div>
<div class="t bg" style="left:1734px;width:53px">3/4</div>
<div class="t bg" style="left:1787px;width:37px;color:#fff;font-weight:bold">1</div>
<!-- 引导文字 -->
<div class="t pl" style="left:1479.500px;top:632px">引导文字</div>
<div class="abs inp" style="left:1480px;top:660px;width:400px;height:40px"></div>
<div class="t" style="left:1499.500px;top:671px;font-size:16px;line-height:22px;color:#606266">请输入学生姓名</div>
<!-- collapsed -->
<div class="abs" style="left:1466.500px;top:727px;width:426px;height:114px;background:#f5f5f6"></div>
<div class="abs" style="left:1466.500px;top:766px;width:426px;height:1px;background:#ebeef5"></div>
<div class="abs" style="left:1466.500px;top:804px;width:426px;height:1px;background:#ebeef5"></div>
<div class="t" style="left:1491.500px;top:736.500px;font-size:16px;line-height:22px;color:#303133">验证</div>
<div class="t" style="left:1491.500px;top:775px;font-size:16px;line-height:22px;color:#303133">高级</div>
<div class="t" style="left:1491.500px;top:813.500px;font-size:16px;line-height:22px;color:#303133">样式</div>
<svg style="left:1870px;top:741px" width="8" height="13" viewBox="0 0 8 13" fill="none" stroke="#303133" stroke-width="1.100"><path d="M1 0.800l5.800 5.700L1 12.200"/></svg>
<svg style="left:1870px;top:779px" width="8" height="13" viewBox="0 0 8 13" fill="none" stroke="#303133" stroke-width="1.100"><path d="M1 0.800l5.800 5.700L1 12.200"/></svg>
<svg style="left:1870px;top:818px" width="8" height="13" viewBox="0 0 8 13" fill="none" stroke="#303133" stroke-width="1.100"><path d="M1 0.800l5.800 5.700L1 12.200"/></svg>
<!--PROPS-END-->

<!-- RIGHT / BOTTOM -->
<!--EDGE-START-->
<!-- right strip -->
<div class="t" style="left:1898px;top:45px;font-size:15px;line-height:20px;width:16px;white-space:normal;color:#000">数据源</div>
<div class="abs" style="left:1893px;top:134px;width:27px;height:1px;background:#c6c6c6"></div>
<div class="t" style="left:1898px;top:143.500px;font-size:15px;line-height:20px;width:16px;white-space:normal;color:#000">离线资源</div>
<div class="abs" style="left:1893px;top:252px;width:27px;height:1px;background:#c6c6c6"></div>
<!-- bottom bar -->
<svg style="left:40px;top:848px" width="20" height="18" viewBox="0 0 20 18" fill="none" stroke="#666" stroke-width="1.500" stroke-linecap="round" stroke-linejoin="round"><path d="M6.200 5c.2-2 1.400-3.200 3.200-3.200S12.400 3 12.600 5"/><path d="M9 15.600H7.600c-1.800 0-2.800-1.200-2.800-3V8c0-1.800 1.200-3 3-3h4.800c1.200 0 2.200.600 2.600 1.600"/><path d="M1.200 6.200l3.400 2M1 16.200l3.800-2.400M14 4.400l3-1.800"/><path d="M11 10h7.600M11 13h7.600M11 16h7.600" stroke-width="1.700" stroke-linecap="butt"/></svg>
<div class="t" style="left:67px;top:848px;font-size:15px;line-height:20px;color:#000">调试信息</div>
<svg style="left:154px;top:850.500px" width="17" height="14" viewBox="0 0 17 14" stroke="#4a4a4a" stroke-width="2.300"><path d="M0 1.600h2.600M4.600 1.600h12.400M0 7h2.600M4.600 7h12.400M0 12.400h2.600M4.600 12.400h12.400"/></svg>
<div class="t" style="left:181.500px;top:848px;font-size:15px;line-height:20px;color:#000">问题</div>
<div class="t" style="left:25px;top:878.500px;font-size:15px;line-height:20px;color:#000">查看资源「js调用弹出窗口」详情</div>
<!--EDGE-END-->
<!-- red annotation rectangles -->
<svg style="left:0;top:0;pointer-events:none" width="1920" height="902" viewBox="0 0 1920 902" fill="none" stroke="#fc1b0f" stroke-width="4.500"><rect x="610.400" y="478.400" width="847.050" height="306.200" rx="3.500"/><rect x="1456.450" y="266.400" width="458.300" height="87.200" rx="3.500"/></svg>
</body>
</html>
